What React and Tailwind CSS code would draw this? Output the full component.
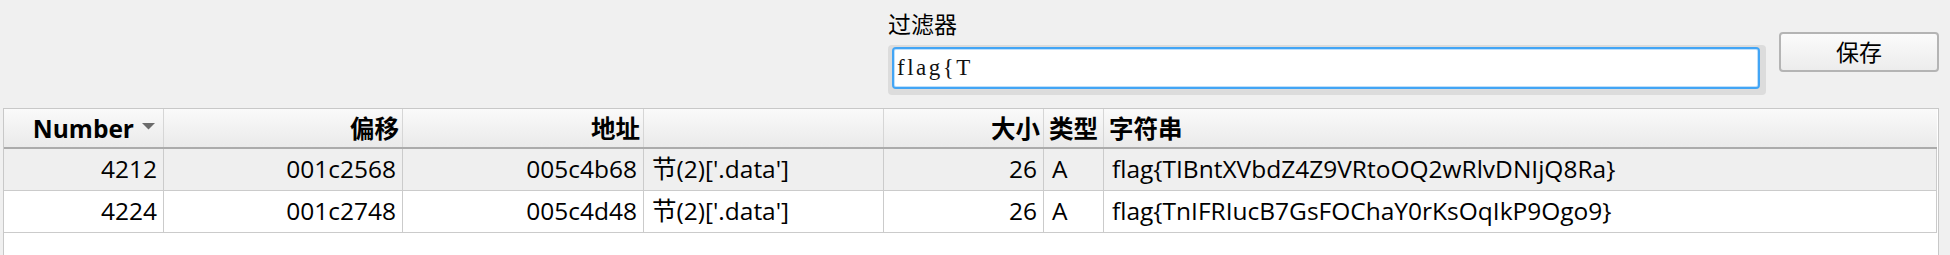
import React from 'react';

const SANS = { fontFamily: '"Open Sans", "Noto Sans CJK SC", sans-serif' };

const cols = [
  { key: 'num', label: 'Number', w: 'w-[160px]', align: 'right', sort: true },
  { key: 'off', label: '偏移', w: 'w-[239px]', align: 'right' },
  { key: 'addr', label: '地址', w: 'w-[241px]', align: 'right' },
  { key: 'sec', label: '', w: 'w-[240px]', align: 'left' },
  { key: 'size', label: '大小', w: 'w-[160px]', align: 'right' },
  { key: 'type', label: '类型', w: 'w-[60px]', align: 'left' },
  { key: 'str', label: '字符串', w: 'flex-1', align: 'left' },
];

const rows = [
  { num: '4212', off: '001c2568', addr: '005c4b68', sec: "节(2)['.data']", size: '26', type: 'A', str: 'flag{TIBntXVbdZ4Z9VRtoOQ2wRlvDNIjQ8Ra}' },
  { num: '4224', off: '001c2748', addr: '005c4d48', sec: "节(2)['.data']", size: '26', type: 'A', str: 'flag{TnIFRIucB7GsFOChaY0rKsOqIkP9Ogo9}' },
];

function SortArrow() {
  return (
    <svg width="13" height="7" viewBox="0 0 13 7" className="ml-[8px] mb-[6px]">
      <path d="M0 0 L13 0 L6.5 6.5 Z" fill="#6b6b6b" />
    </svg>
  );
}

export default function App() {
  return (
    <div className="w-[1950px] h-[255px] bg-[#f0f0f0] overflow-hidden text-black" style={SANS}>
      {/* filter bar */}
      <div className="h-[108px] flex justify-end pr-[11px] gap-[13px]">
        <div className="w-[878px] flex flex-col">
          <div className="h-[45px] pt-[9px] text-[23px] leading-[30px]">过滤器</div>
          <div className="h-[50px] w-full rounded-[4px] bg-[#dcdcdc] pl-[4px] pt-[2px] pr-[6px] pb-[6px]">
            <div className="h-[42px] rounded-[4px] border-2 border-[#42a5f5] bg-white flex items-center pl-[3px] shadow-[inset_0_0_0_1px_#bfe0fb]">
              <span className="text-[23px] tracking-[2.5px] text-[#111]" style={{ fontFamily: '"Liberation Serif", serif' }}>flag{'{'}T</span>
            </div>
          </div>
        </div>
        <div className="pt-[32px]">
          <button className="w-[160px] h-[40px] rounded-[4px] border-2 border-[#b4b4b4] bg-gradient-to-b from-[#fbfbfb] to-[#ececec] text-[23px] leading-none">
            保存
          </button>
        </div>
      </div>

      {/* table */}
      <div className="ml-[3px] w-[1936px] h-[147px] border border-b-0 border-[#c8c8c8] bg-white pr-[1px]">
        <div className="flex h-[40px] border-b-2 border-[#ababab] bg-gradient-to-b from-[#fafafa] to-[#eaeaea]">
          {cols.map((c) => (
            <div
              key={c.key}
              className={`${c.w} h-full flex items-center pt-[2px] border-r border-[#d6d6d6] text-[24.5px] font-bold ${c.align === 'right' ? 'justify-end pr-[3px]' : 'justify-start pl-[5px]'} ${c.key === 'str' ? 'border-r-0' : ''}`}
            >
              <span>{c.label}</span>
              {c.sort && <SortArrow />}
              {c.sort && <span className="w-[5px]" />}
            </div>
          ))}
        </div>
        {rows.map((r, i) => (
          <div key={r.num} className={`flex h-[42px] border-b border-[#cbcbcb] ${i === 0 ? 'bg-[#efefef]' : 'bg-white'}`}>
            {cols.map((c) => (
              <div
                key={c.key}
                className={`${c.w} h-full flex items-center border-r border-[#cbcbcb] text-[24.5px] whitespace-nowrap ${c.align === 'right' ? 'justify-end pr-[6px]' : 'justify-start pl-[8px]'}`}
              >
                {r[c.key]}
              </div>
            ))}
          </div>
        ))}
      </div>
    </div>
  );
}
